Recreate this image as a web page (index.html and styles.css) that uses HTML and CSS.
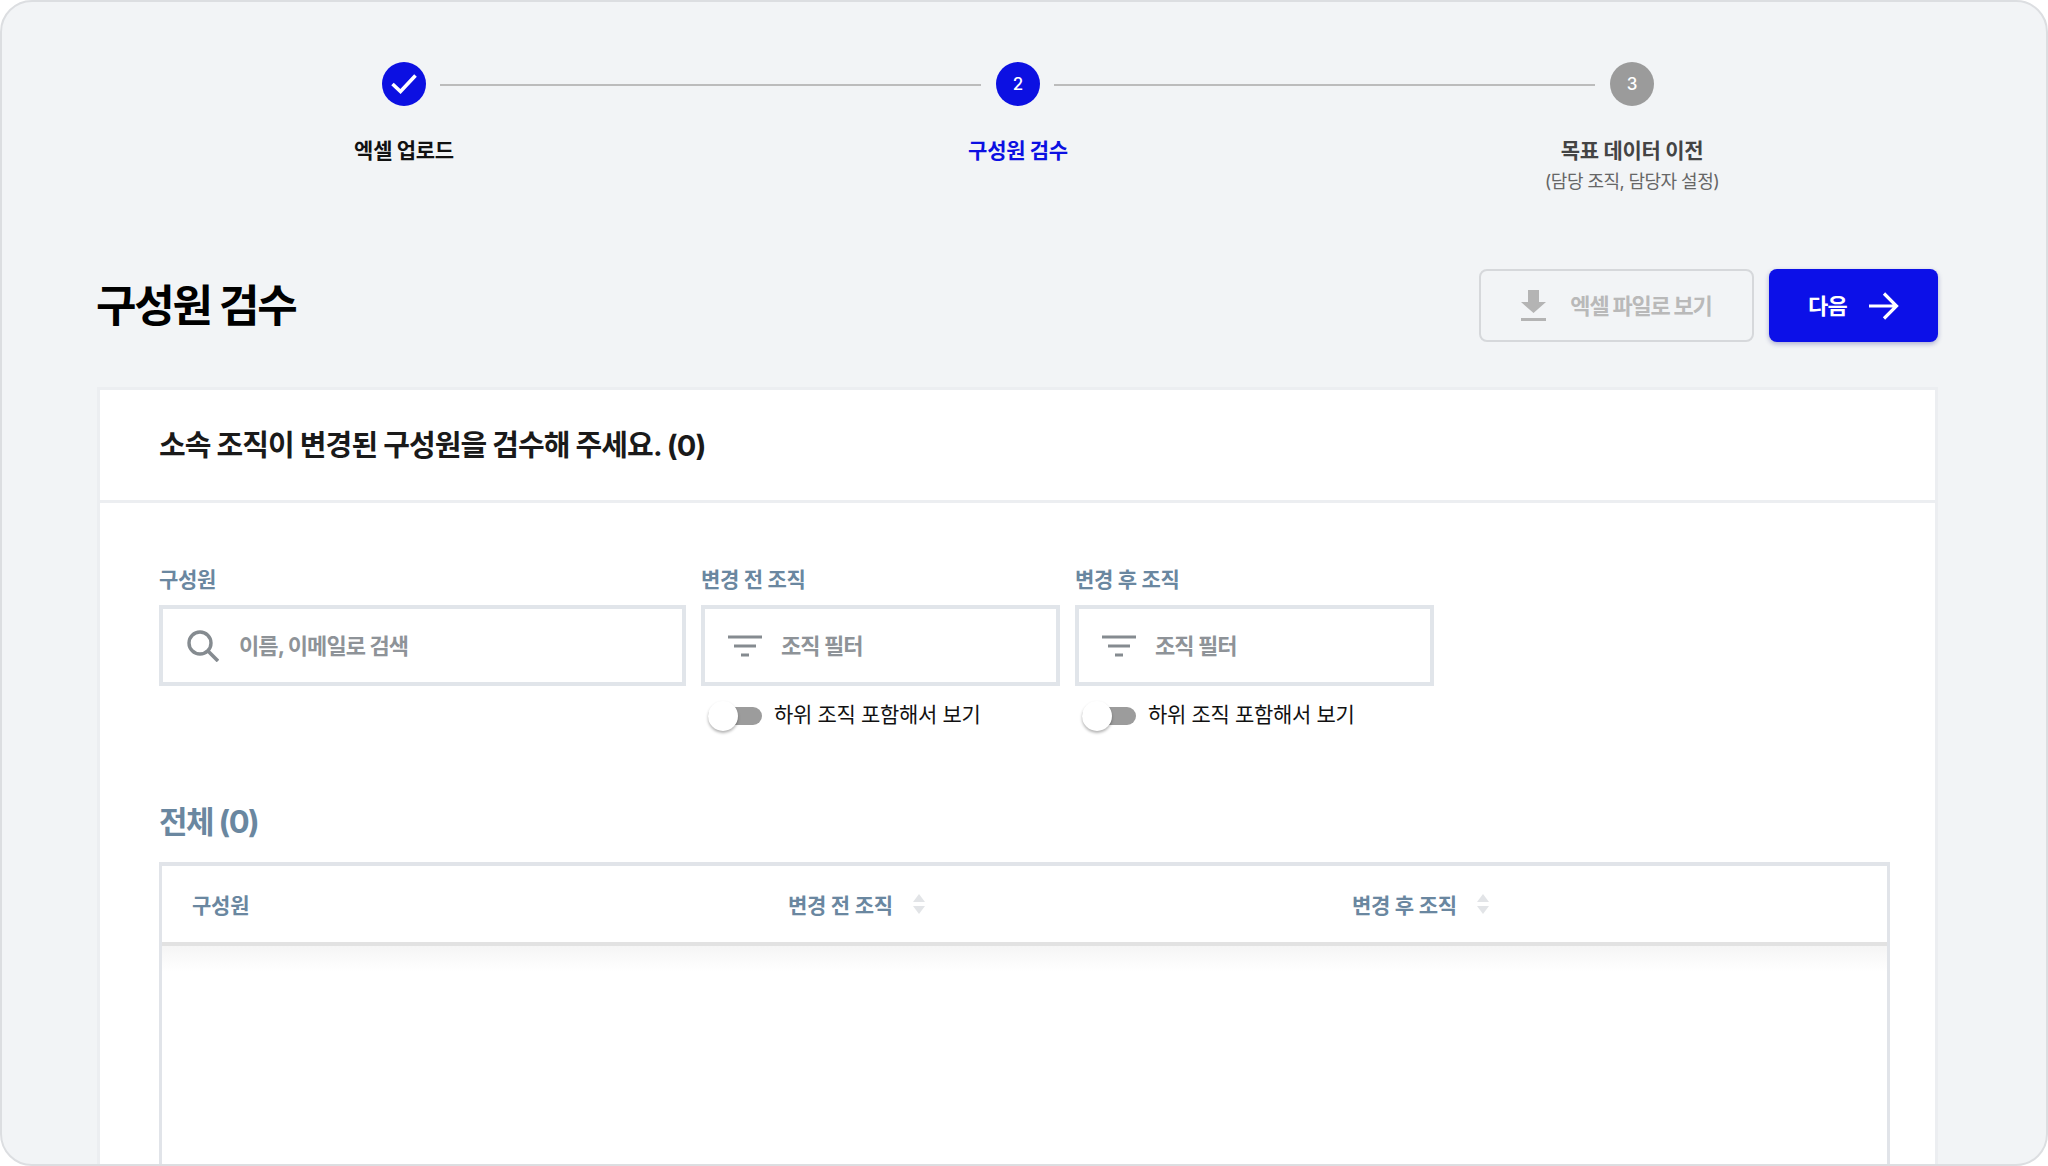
FILE: index.html
```html
<!DOCTYPE html>
<html lang="ko">
  <head>
    <meta charset="UTF-8" />
    <meta name="viewport" content="width=device-width, initial-scale=1.0" />
    <title>구성원 검수</title>
    <link rel="stylesheet" href="styles.css">
  </head>
  <body>
    <div class="frame">
      <div class="stepper">
        <div class="step step-done">
          <div class="step-circle">
            <svg width="26" height="20" viewBox="0 0 26 20"><path d="M1.5 10 L9.5 17.5 L24.5 1.5" fill="none" stroke="#fff" stroke-width="3.6"/></svg>
          </div>
          <div class="step-label">엑셀 업로드</div>
        </div>
        <div class="step-line"></div>
        <div class="step step-active">
          <div class="step-circle">2</div>
          <div class="step-label">구성원 검수</div>
        </div>
        <div class="step-line"></div>
        <div class="step step-todo">
          <div class="step-circle">3</div>
          <div class="step-label">목표 데이터 이전</div>
          <div class="step-sub">(담당 조직, 담당자 설정)</div>
        </div>
      </div>

      <div class="page-head">
        <h1>구성원 검수</h1>
        <div class="page-actions">
          <button type="button" class="btn-ghost">
            <svg width="25" height="31" viewBox="0 0 25 31"><path d="M7 0 H18 V12 H25 L12.5 23 L0 12 H7 Z M0 28 H25 V31 H0 Z" fill="#b4b4b4"/></svg>
            <span>엑셀 파일로 보기</span>
          </button>
          <button type="button" class="btn-primary">
            <span>다음</span>
            <svg width="30" height="28" viewBox="0 0 30 28"><path d="M0 14 H27 M15 1.5 L27.5 14 L15 26.5" fill="none" stroke="#fff" stroke-width="3.2"/></svg>
          </button>
        </div>
      </div>

      <div class="card">
        <div class="card-head">소속 조직이 변경된 구성원을 검수해 주세요. (0)</div>
        <div class="card-body">
          <div class="filters">
            <div class="filter filter-member">
              <label>구성원</label>
              <div class="input-box">
                <svg width="32" height="32" viewBox="0 0 32 32"><circle cx="13" cy="13" r="11" fill="none" stroke="#858b90" stroke-width="3.4"/><path d="M21 21 L31 31" stroke="#858b90" stroke-width="3.6"/></svg>
                <span>이름, 이메일로 검색</span>
              </div>
            </div>
            <div class="filter filter-org">
              <label>변경 전 조직</label>
              <div class="input-box">
                <svg width="34" height="22" viewBox="0 0 34 22"><path d="M0 2 H34 M6 11 H28 M13 20 H21" stroke="#858b90" stroke-width="3"/></svg>
                <span>조직 필터</span>
              </div>
              <div class="toggle-row">
                <span class="toggle"><span class="toggle-thumb"></span></span>
                <span class="toggle-text">하위 조직 포함해서 보기</span>
              </div>
            </div>
            <div class="filter filter-org">
              <label>변경 후 조직</label>
              <div class="input-box">
                <svg width="34" height="22" viewBox="0 0 34 22"><path d="M0 2 H34 M6 11 H28 M13 20 H21" stroke="#858b90" stroke-width="3"/></svg>
                <span>조직 필터</span>
              </div>
              <div class="toggle-row">
                <span class="toggle"><span class="toggle-thumb"></span></span>
                <span class="toggle-text">하위 조직 포함해서 보기</span>
              </div>
            </div>
          </div>

          <h2 class="total">전체 (0)</h2>

          <div class="table">
            <div class="table-head">
              <div class="th">구성원</div>
              <div class="th">변경 전 조직
                <svg class="sort" width="12" height="20" viewBox="0 0 12 20"><path d="M6 0 L12 8 H0 Z M0 12 H12 L6 20 Z" fill="#e2e4e7"/></svg>
              </div>
              <div class="th">변경 후 조직
                <svg class="sort" width="12" height="20" viewBox="0 0 12 20"><path d="M6 0 L12 8 H0 Z M0 12 H12 L6 20 Z" fill="#e2e4e7"/></svg>
              </div>
            </div>
            <div class="table-body"></div>
          </div>
        </div>
      </div>
    </div>
  </body>
</html>
```

FILE: styles.css
```css
/* page frame */
html,
body {
  height: 100%;
}

body {
  margin: 0;
  background: #fff;
  font-family: Inter, "Noto Sans CJK KR", sans-serif;
  overflow: hidden;
}

.frame {
  box-sizing: border-box;
  height: 100vh;
  overflow: hidden;
  background: #f2f4f6;
  border: 2px solid #dcdee1;
  border-radius: 32px;
}

/* stepper */
.stepper {
  display: flex;
  width: 1272px;
  margin-left: 380px;
  padding-top: 60px;
  height: 204px;
  box-sizing: border-box;
}

.step {
  display: flex;
  flex-direction: column;
  align-items: center;
  width: 44px;
  flex: none;
}

.step-circle {
  display: flex;
  justify-content: center;
  align-items: center;
  flex: none;
  width: 44px;
  height: 44px;
  border-radius: 50%;
  color: #fff;
  font-size: 17px;
  font-weight: 500;
}

.step-done .step-circle,
.step-active .step-circle {
  background: #0c10e2;
}

.step-todo .step-circle {
  background: #9b9b9b;
}

.step-label {
  margin-top: 30px;
  font-size: 21px;
  line-height: 30px;
  font-weight: 700;
  letter-spacing: -0.3px;
  white-space: nowrap;
  color: #111;
}

.step-active .step-label {
  color: #0c10e2;
}

.step-todo .step-label {
  color: #444;
}

.step-sub {
  margin-top: 3px;
  font-size: 18px;
  line-height: 26px;
  letter-spacing: -0.55px;
  white-space: nowrap;
  color: #666;
}

.step-line {
  flex: 1;
  height: 2px;
  margin: 22px 15px 0 14px;
  background: #bcbcbc;
}

/* title row */
.page-head {
  display: flex;
  justify-content: space-between;
  align-items: center;
  height: 73px;
  margin: 63px 108px 0 94px;
}

.page-head h1 {
  margin: 0 0 5px;
  font-size: 44px;
  font-weight: 700;
  letter-spacing: -2.2px;
  color: #000;
}

.page-actions {
  display: flex;
  gap: 15px;
}

.btn-ghost,
.btn-primary {
  display: flex;
  justify-content: center;
  align-items: center;
  height: 73px;
  box-sizing: border-box;
  border-radius: 8px;
  font-family: inherit;
  font-size: 22px;
  font-weight: 700;
}

.btn-ghost span,
.btn-primary span {
  margin-top: -3px;
}

.btn-ghost {
  width: 275px;
  gap: 24px;
  background: transparent;
  border: 2px solid #d6d8db;
  color: #b9b9b9;
  letter-spacing: -1.2px;
}

.btn-primary {
  width: 169px;
  gap: 22px;
  background: #0c10e8;
  border: none;
  color: #fff;
  letter-spacing: -0.8px;
  box-shadow: 0 2px 5px rgba(10, 14, 120, 0.3);
}

/* card */
.card {
  margin: 45px 108px 0 95px;
  background: #fff;
  border: 3px solid #eceef1;
  border-bottom: none;
}

.card-head {
  height: 110px;
  padding-left: 59px;
  line-height: 111px;
  font-size: 29px;
  font-weight: 700;
  letter-spacing: -0.9px;
  color: #1a1a1a;
  border-bottom: 3px solid #eceef1;
}

.card-body {
  padding: 58px 45px 0 59px;
}

.filters {
  display: flex;
  gap: 15px;
}

.filter label {
  display: block;
  height: 44px;
  line-height: 38px;
  font-size: 21px;
  font-weight: 700;
  letter-spacing: -0.3px;
  color: #6a87a0;
}

.filter-member {
  width: 527px;
}

.filter-org {
  width: 359px;
}

.input-box {
  display: flex;
  align-items: center;
  box-sizing: border-box;
  height: 81px;
  background: #fff;
  border: 4px solid #e1e5ea;
  font-size: 22px;
  font-weight: 700;
  letter-spacing: -0.9px;
  color: #8e9398;
}

.input-box span {
  margin-top: -3px;
}

.filter-member .input-box {
  gap: 20px;
  padding-left: 24px;
}

.filter-org .input-box {
  gap: 19px;
  padding-left: 23px;
}

.toggle-row {
  display: flex;
  align-items: center;
  gap: 12px;
  height: 44px;
  margin-top: 8px;
  padding-left: 7px;
  font-size: 21px;
  letter-spacing: -0.35px;
  color: #111;
}

.toggle-text {
  margin-top: -6px;
}

.toggle {
  position: relative;
  display: block;
  width: 54px;
  height: 18px;
  border-radius: 9px;
  background: #9c9c9c;
}

.toggle-thumb {
  position: absolute;
  left: 0;
  top: -6px;
  width: 30px;
  height: 30px;
  border-radius: 50%;
  background: #fff;
  box-shadow: 0 2px 3px rgba(0, 0, 0, 0.3);
}

/* table */
.total {
  margin: 53px 0 0;
  height: 60px;
  line-height: 62px;
  font-size: 31px;
  font-weight: 700;
  letter-spacing: -1.6px;
  color: #6a87a0;
}

.table {
  margin-top: 11px;
  height: 500px;
  border: 3px solid #e1e4e9;
  border-top-width: 4px;
}

.table-head {
  display: grid;
  grid-template-columns: 596px 564px 1fr;
  align-items: center;
  height: 76px;
  padding-left: 30px;
  border-bottom: 4px solid #e2e2e2;
}

.th {
  display: flex;
  align-items: center;
  gap: 20px;
  font-size: 21px;
  font-weight: 700;
  letter-spacing: -0.25px;
  color: #6a87a0;
}

.table-body {
  height: 26px;
  background: linear-gradient(to bottom, #f5f5f5, #fff);
}
```
